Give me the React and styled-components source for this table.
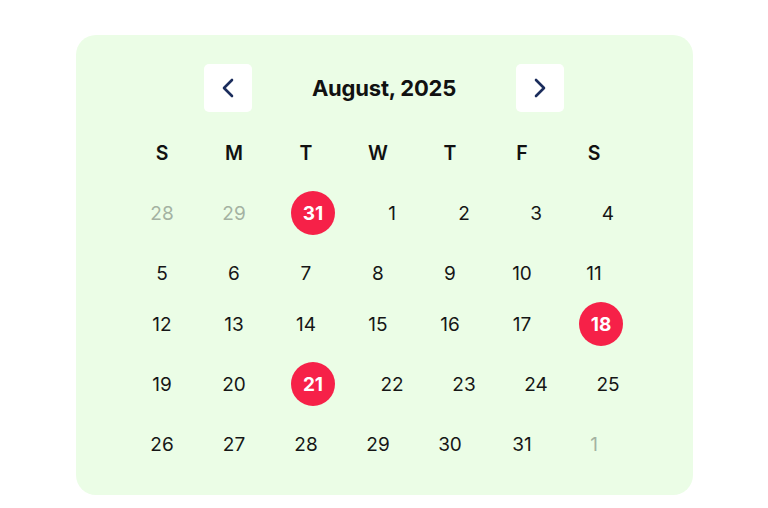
import React from 'react';
import styled, { createGlobalStyle } from 'styled-components';

const GlobalStyle = createGlobalStyle`
  body {
    margin: 0;
    background: #ffffff;
    font-family: Inter, 'Noto Sans', sans-serif;
  }
`;

const weekDays = ['S', 'M', 'T', 'W', 'T', 'F', 'S'];

const weeks = [
  [
    { d: 28, muted: true },
    { d: 29, muted: true },
    { d: 31, active: true },
    { d: 1 },
    { d: 2 },
    { d: 3 },
    { d: 4 },
  ],
  [{ d: 5 }, { d: 6 }, { d: 7 }, { d: 8 }, { d: 9 }, { d: 10 }, { d: 11 }],
  [{ d: 12 }, { d: 13 }, { d: 14 }, { d: 15 }, { d: 16 }, { d: 17 }, { d: 18, active: true }],
  [{ d: 19 }, { d: 20 }, { d: 21, active: true }, { d: 22 }, { d: 23 }, { d: 24 }, { d: 25 }],
  [{ d: 26 }, { d: 27 }, { d: 28 }, { d: 29 }, { d: 30 }, { d: 31 }, { d: 1, muted: true }],
];

const Chevron = ({ dir }) => (
  <svg width="14" height="20" viewBox="0 0 14 20" fill="none">
    <path
      d={dir === 'left' ? 'M11 2 L3 10 L11 18' : 'M3 2 L11 10 L3 18'}
      stroke="#1b2d5c"
      strokeWidth="2.6"
      strokeLinecap="round"
      strokeLinejoin="round"
    />
  </svg>
);

const App = () => {
  return (
    <>
      <GlobalStyle />
      <Card>
        <Header>
          <NavButton aria-label="Previous month">
            <Chevron dir="left" />
          </NavButton>
          <Title>August, 2025</Title>
          <NavButton aria-label="Next month">
            <Chevron dir="right" />
          </NavButton>
        </Header>

        <Grid>
          <WeekHeader>
            {weekDays.map((w, i) => (
              <WeekDay key={i}>{w}</WeekDay>
            ))}
          </WeekHeader>

          <Weeks>
            {weeks.map((week, i) => (
              <Week key={i}>
                {week.map((day, j) =>
                  day.active ? (
                    <ActiveDay key={j}>{day.d}</ActiveDay>
                  ) : (
                    <Day key={j} $muted={day.muted}>
                      {day.d}
                    </Day>
                  )
                )}
              </Week>
            ))}
          </Weeks>
        </Grid>
      </Card>
    </>
  );
};

const Card = styled.div`
  width: 617px;
  height: 460px;
  box-sizing: border-box;
  margin: 35px auto 0;
  padding: 29px 48px 29px 50px;
  background: #ebfde6;
  border-radius: 20px;
  display: flex;
  flex-direction: column;
  align-items: center;
`;

const Header = styled.div`
  width: 361px;
  margin-right: 2px;
  display: flex;
  align-items: center;
  justify-content: space-between;
`;

const NavButton = styled.button`
  width: 48px;
  height: 48px;
  border: none;
  border-radius: 5px;
  background: #ffffff;
  display: flex;
  align-items: center;
  justify-content: center;
  padding: 0;
  cursor: pointer;
`;

const Title = styled.h2`
  margin: 0;
  font-size: 22px;
  font-weight: 700;
  letter-spacing: -0.2px;
  color: #111111;
`;

const Grid = styled.div`
  width: 518px;
  display: flex;
  flex-direction: column;
`;

const WeekHeader = styled.div`
  display: flex;
  height: 44px;
  align-items: center;
  margin-top: 19px;
`;

const WeekDay = styled.div`
  width: 72px;
  text-align: center;
  font-size: 19.5px;
  font-weight: 600;
  color: #111111;
`;

const Weeks = styled.div`
  display: flex;
  flex-direction: column;
  gap: 7px;
  margin-top: 16px;
`;

const Week = styled.div`
  display: flex;
  align-items: flex-start;
`;

const Day = styled.div`
  width: 72px;
  height: 44px;
  display: flex;
  align-items: center;
  justify-content: center;
  font-size: 19px;
  font-weight: 400;
  color: ${(p) => (p.$muted ? '#a4b2a2' : '#161616')};
`;

const ActiveDay = styled.div`
  width: 44px;
  height: 44px;
  margin: 0 21px 9px 21px;
  border-radius: 50%;
  background: #f62148;
  color: #ffffff;
  display: flex;
  align-items: center;
  justify-content: center;
  font-size: 19px;
  font-weight: 700;
`;

export default App;
